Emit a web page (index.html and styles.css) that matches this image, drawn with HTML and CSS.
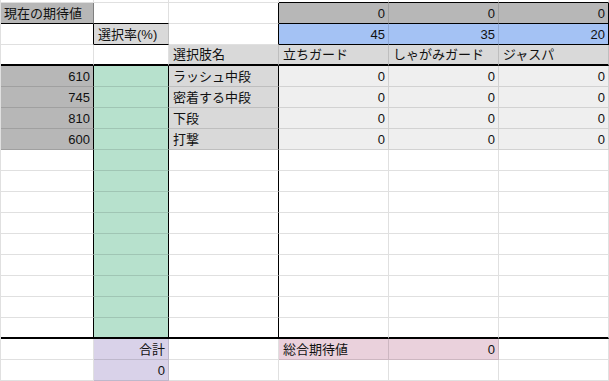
FILE: index.html
```html
<!DOCTYPE html>
<html lang="ja">
<head>
<meta charset="utf-8">
<title>期待値シート</title>
<link rel="stylesheet" href="styles.css">
</head>
<body>
<div class="sheet">
  <!-- row 0 (partial) -->
  <div class="c top"></div><div class="c top"></div><div class="c top"></div><div class="c top bb"></div><div class="c top bb"></div><div class="c top bb"></div>
  <!-- row 1 -->
  <div class="c g1 bb ar">現在の期待値</div><div class="c bb"></div><div class="c br"></div><div class="c g1 bb r">0</div><div class="c g1 bb r">0</div><div class="c g1 bb br r">0</div>
  <!-- row 2 -->
  <div class="c br"></div><div class="c g2 bb">選択率(%)</div><div class="c br"></div><div class="c blue bb r">45</div><div class="c blue bb r">35</div><div class="c blue bb br r">20</div>
  <!-- row 3 -->
  <div class="c bb2"></div><div class="c bb2"></div><div class="c g2 bb2">選択肢名</div><div class="c g2 bb2">立ちガード</div><div class="c g2 bb2">しゃがみガード</div><div class="c g2 bb2">ジャスパ</div>
  <!-- rows 4-7 -->
  <div class="c g1 br r">610</div><div class="c green br"></div><div class="c g2 br">ラッシュ中段</div><div class="c g3 r">0</div><div class="c g3 r">0</div><div class="c g3 r">0</div>
  <div class="c g1 br r">745</div><div class="c green br"></div><div class="c g2 br">密着する中段</div><div class="c g3 r">0</div><div class="c g3 r">0</div><div class="c g3 r">0</div>
  <div class="c g1 br r">810</div><div class="c green br"></div><div class="c g2 br">下段</div><div class="c g3 r">0</div><div class="c g3 r">0</div><div class="c g3 r">0</div>
  <div class="c g1 br r">600</div><div class="c green br"></div><div class="c g2 br">打撃</div><div class="c g3 r">0</div><div class="c g3 r">0</div><div class="c g3 r">0</div>
  <!-- rows 8-15 -->
  <div class="c br"></div><div class="c green br"></div><div class="c br"></div><div class="c"></div><div class="c"></div><div class="c"></div>
  <div class="c br"></div><div class="c green br"></div><div class="c br"></div><div class="c"></div><div class="c"></div><div class="c"></div>
  <div class="c br"></div><div class="c green br"></div><div class="c br"></div><div class="c"></div><div class="c"></div><div class="c"></div>
  <div class="c br"></div><div class="c green br"></div><div class="c br"></div><div class="c"></div><div class="c"></div><div class="c"></div>
  <div class="c br"></div><div class="c green br"></div><div class="c br"></div><div class="c"></div><div class="c"></div><div class="c"></div>
  <div class="c br"></div><div class="c green br"></div><div class="c br"></div><div class="c"></div><div class="c"></div><div class="c"></div>
  <div class="c br"></div><div class="c green br"></div><div class="c br"></div><div class="c"></div><div class="c"></div><div class="c"></div>
  <div class="c br"></div><div class="c green br"></div><div class="c br"></div><div class="c"></div><div class="c"></div><div class="c"></div>
  <!-- row 16 -->
  <div class="c br bb2"></div><div class="c green br bb2"></div><div class="c br bb2"></div><div class="c bb2"></div><div class="c bb2"></div><div class="c bb2"></div>
  <!-- row 17 -->
  <div class="c"></div><div class="c purple r">合計</div><div class="c"></div><div class="c pink">総合期待値</div><div class="c pink r">0</div><div class="c"></div>
  <!-- row 18 -->
  <div class="c"></div><div class="c purple r">0</div><div class="c"></div><div class="c"></div><div class="c"></div><div class="c"></div>
</div>
</body>
</html>
```
FILE: styles.css
```css
html, body {
  margin: 0;
  padding: 0;
  background: #ffffff;
  overflow: hidden;
}

.sheet {
  display: grid;
  grid-template-columns: 93px 75px 110px 110px 110px 110px;
  grid-template-rows: 3px repeat(18, 21px);
  border-left: 1px solid #e0e0e0;
  width: 609px;
  box-sizing: border-box;
  font-family: "Liberation Sans", "Noto Sans CJK JP", sans-serif;
  font-size: 13px;
  color: #111111;
}

.c {
  box-sizing: border-box;
  border-right: 1px solid rgba(0, 0, 0, 0.12);
  border-bottom: 1px solid rgba(0, 0, 0, 0.12);
  display: flex;
  align-items: center;
  padding: 0 3px 0 4px;
  white-space: nowrap;
  overflow: hidden;
  line-height: 1;
}

.top { padding: 0; }

.r { justify-content: flex-end; }

.ar { border-right-color: rgba(0, 0, 0, 0.3); padding-left: 3px; }

.br { border-right-color: #000000; }
.bb { border-bottom-color: #000000; }
.bb2 { border-bottom: 2px solid #000000; }

.g1 { background: #b7b7b7; }
.g2 { background: #d9d9d9; }
.g3 { background: #efefef; }
.blue { background: #a4c2f4; }
.green { background: #b7e1cd; }
.purple { background: #d9d2e9; }
.pink { background: #ead1dc; }
```
